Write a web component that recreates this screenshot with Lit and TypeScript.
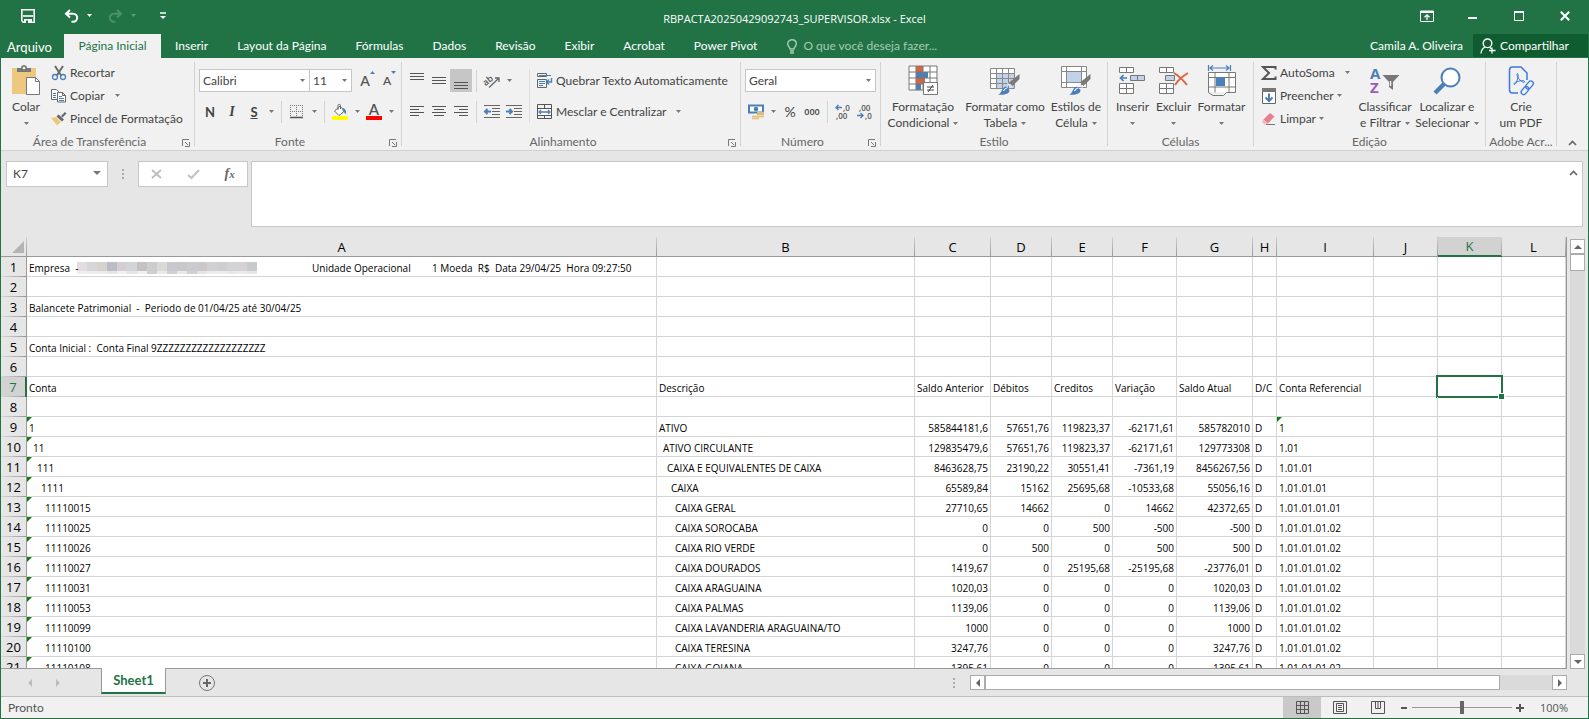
import { LitElement, html, css, svg, nothing } from "lit";
import { customElement, state } from "lit/decorators.js";
import { classMap } from "lit/directives/class-map.js";

type Row = [string, string, string, string, string, string, string, string, string];

const COLUMNS = [
  ["A", "auto"], ["B", "258px"], ["C", "76px"], ["D", "61px"], ["E", "61px"], ["F", "64px"],
  ["G", "76px"], ["H", "24px"], ["I", "97px"], ["J", "64px"], ["K", "64px"], ["L", "64px"],
];

const ACCOUNTS: Row[] = [
  ["1", "ATIVO", "585844181,6", "57651,76", "119823,37", "-62171,61", "585782010", "D", "1"],
  ["11", "ATIVO CIRCULANTE", "129835479,6", "57651,76", "119823,37", "-62171,61", "129773308", "D", "1.01"],
  ["111", "CAIXA E EQUIVALENTES DE CAIXA", "8463628,75", "23190,22", "30551,41", "-7361,19", "8456267,56", "D", "1.01.01"],
  ["1111", "CAIXA", "65589,84", "15162", "25695,68", "-10533,68", "55056,16", "D", "1.01.01.01"],
  ["11110015", "CAIXA GERAL", "27710,65", "14662", "0", "14662", "42372,65", "D", "1.01.01.01.01"],
  ["11110025", "CAIXA SOROCABA", "0", "0", "500", "-500", "-500", "D", "1.01.01.01.02"],
  ["11110026", "CAIXA RIO VERDE", "0", "500", "0", "500", "500", "D", "1.01.01.01.02"],
  ["11110027", "CAIXA DOURADOS", "1419,67", "0", "25195,68", "-25195,68", "-23776,01", "D", "1.01.01.01.02"],
  ["11110031", "CAIXA ARAGUAINA", "1020,03", "0", "0", "0", "1020,03", "D", "1.01.01.01.02"],
  ["11110053", "CAIXA PALMAS", "1139,06", "0", "0", "0", "1139,06", "D", "1.01.01.01.02"],
  ["11110099", "CAIXA LAVANDERIA ARAGUAINA/TO", "1000", "0", "0", "0", "1000", "D", "1.01.01.01.02"],
  ["11110100", "CAIXA TERESINA", "3247,76", "0", "0", "0", "3247,76", "D", "1.01.01.01.02"],
  ["11110108", "CAIXA GOIANA", "1395,61", "0", "0", "0", "1395,61", "D", "1.01.01.01.02"],
];

const MOSAIC = ["#e3dce1", "#d6d6d9", "#d6d3cf", "#bcbcc6", "#d4ced2", "#d2d4d7", "#c5c2c4", "#cccdcd", "#d9dad6",
  "#c8c8ce", "#c8c8cb", "#cacbd1", "#cbc7ca", "#d1d0d2", "#cfcdd0", "#d3d3d5", "#d5d1d4", "#c9cacb"];
const MOSAIC_LOW = ["#f0ecef", "#ececec", "#ecebea", "#e6e6e9", "#f2f0f1", "#e4e5e6", "#efeff0", "#cfd0ce", "#eaebe9",
  "#d0d0d5", "#e8e8ea", "#d0d0d6", "#e6e4e6", "#ebeaec", "#ececed", "#e8e8e9", "#eceaec", "#e6e6e7"];

const icon = (w: number, h: number, body: unknown) =>
  html`<svg class="ic" width=${w} height=${h} viewBox="0 0 ${w} ${h}" fill="none" aria-hidden="true">${body}</svg>`;

const caret = html`<svg class="ic caret" width="5" height="3" viewBox="0 0 5 3" aria-hidden="true"><path d="M0 0h5L2.500 3z" fill="#777"/></svg>`;
const caretFar = html`<svg class="ic caret far" width="5" height="3" viewBox="0 0 5 3" aria-hidden="true"><path d="M0 0h5L2.500 3z" fill="#777"/></svg>`;

const gridPath = (x: number, y: number, cw: number, ch: number, cols: number, rows: number) => {
  let d = "";
  for (let i = 0; i <= cols; i++) d += `M${x + i * cw} ${y}v${rows * ch}`;
  for (let j = 0; j <= rows; j++) d += `M${x} ${y + j * ch}h${cols * cw}`;
  return d;
};

const brush = svg`
  <path d="M29.500 8v5l-7 7-3.500-3.500z" fill="#7a7a7a"/>
  <path d="M8 28.500c4-.5 3-7 8-8l3.500 3.500c.5 4-6 5.500-11.500 4.500z" fill="#4a7fb8"/>
  <path d="M13.500 25c1-1.500 1.500-3 3.500-3" stroke="#fff" stroke-width="1.200"/>
  <path d="M17.500 17.500l4 4" stroke="#f1f1f1" stroke-width="1.200"/>`;

const I = {
  save: icon(14, 14, svg`<path d="M.8.8h12.400v12.400H2.300L.8 11.700z" stroke="#fff" stroke-width="1.600"/><path d="M2 7h10" stroke="#fff" stroke-width="1.600"/><path d="M3 10h8v4H3z" fill="#fff"/><path d="M5 11.500h2V14H5z" fill="#217346"/>`),
  undo: icon(15, 14, svg`<path d="M6 1L2 4.700 6 8.500M2.500 4.700H9c5.500 0 5.500 8 0 8H7.500" stroke="#fff" stroke-width="2"/>`),
  redo: icon(15, 14, svg`<path d="M9 1l4 3.700L9 8.500M12.500 4.700H6c-5.500 0-5.500 8 0 8h1.500" stroke="#4d906b" stroke-width="2"/>`),
  qcaret: icon(5, 3, svg`<path d="M0 0h5L2.500 3z" fill="#fff"/>`),
  qcaretOff: icon(5, 3, svg`<path d="M0 0h5L2.500 3z" fill="#5c9a77"/>`),
  custom: icon(6, 8, svg`<path d="M0 1h6" stroke="#fff" stroke-width="1.500"/><path d="M0 4h6L3 7z" fill="#fff"/>`),
  ribbonOpt: icon(14, 12, svg`<path d="M.5 1h13v10.500H.5z" stroke="#fff"/><path d="M0 2h14" stroke="#fff" stroke-width="2"/><path d="M7 10V5M4.500 7.200L7 4.800l2.500 2.400" stroke="#fff" stroke-width="1.300"/>`),
  min: icon(10, 10, svg`<path d="M0 7h9" stroke="#fff" stroke-width="2"/>`),
  max: icon(10, 10, svg`<path d="M.5 1h9v8.500h-9z" stroke="#fff"/><path d="M0 1h10" stroke="#fff" stroke-width="2"/>`),
  close: icon(10, 10, svg`<path d="M.8.8l8.400 8.400M9.200.8L.8 9.200" stroke="#fff" stroke-width="2"/>`),
  bulb: icon(10, 15, svg`<path d="M3 10c0-2-2.300-2.500-2.300-5C.7 2.500 2.500.8 5 .8s4.300 1.700 4.300 4.200c0 2.500-2.300 3-2.300 5z" stroke="#a5cbb4" stroke-width="1.400"/><path d="M3 12h4M3 14h4" stroke="#a5cbb4" stroke-width="1.300"/>`),
  person: icon(16, 16, svg`<circle cx="7.500" cy="5.300" r="4.300" stroke="#fff" stroke-width="1.400"/><path d="M1 15.500c.3-3.500 2-5.500 4.200-6.300M9.500 9.200l2 1.600M12 9.500v6M9 12.500h6.500" stroke="#fff" stroke-width="1.300"/>`),
  paste: icon(30, 31, svg`<path d="M1 3h24v26H1z" fill="#edc87e"/><path d="M6 3h4c0-4 6-4 6 0h4v4H6z" fill="#777"/><circle cx="13" cy="3" r="1.300" fill="#f1f1f1"/><path d="M15.500 12.500h9l4 4v13h-13z" fill="#fff" stroke="#777"/><path d="M24.500 12.500v4h4" stroke="#777"/>`),
  cut: icon(16, 16, svg`<path d="M4 1l6.500 10M12 1L5.500 11" stroke="#6a6a6a" stroke-width="2"/><circle cx="4" cy="12" r="2.500" stroke="#4a7fb8" stroke-width="1.300"/><circle cx="12" cy="12" r="2.500" stroke="#4a7fb8" stroke-width="1.300"/>`),
  copy: icon(16, 16, svg`<path d="M.5 1.500h5l2 2v8h-7z" fill="#fff" stroke="#666"/><path d="M2 5.500h3M2 7.500h3M2 9.500h3" stroke="#4a7fb8"/><path d="M6.500 4.500h5l3 3v6.500h-8z" fill="#fff" stroke="#666"/><path d="M11.500 4.500v3h3" stroke="#666"/><path d="M8 8.500h3M8 10.500h5M8 12.500h5" stroke="#4a7fb8"/>`),
  painter: icon(16, 15, svg`<path d="M0 7l5-1 5 5-4 3.500z" fill="#edc87e"/><path d="M5.500 5.500l2-2 5.500 5-2 2z" fill="#666"/><path d="M10 5l4-4 1.500 1.500-4 4z" fill="#666"/>`),
  borders: icon(14, 14, svg`<path d="M.5 0v12M6.500 0v12M12.500 0v12M0 .5h13M0 6.500h13" stroke="#777" stroke-dasharray="1 1"/><path d="M0 12.500h13" stroke="#555" stroke-width="1.500"/>`),
  bucket: icon(16, 16, svg`<path d="M2.500 7L8 2l4.500 5L7 11.500z" fill="#fff" stroke="#666"/><path d="M6 6V1.500C6 0 8.500 0 8.500 1.500V5" stroke="#666"/><path d="M10 4c3 0 4.500 2.500 4 6-1.500-.5-1.800-2-3.500-4z" fill="#4a7fb8"/><path d="M0 12h16v4H0z" fill="#ff0"/>`),
  orient: icon(16, 15, svg`<text x="-1" y="10" transform="rotate(-38 5 8)" class="glyph-sm">ab</text><path d="M5 14.500L14.500 5.500M11 5h4v4" stroke="#666" stroke-width="1.300"/>`),
  wrap: icon(17, 16, svg`<path d="M.5.500h9v3h-9zM.5 6.500h9v8h-9z" stroke="#666"/><path d="M2 2.500h12M2 8.500h6M2 10.500h6M2 12.500h4" stroke="#4a7fb8"/><path d="M14.500 5v4h-5M12 6.500L9.500 9l2.500 2.500" stroke="#4a7fb8" stroke-width="1.400"/>`),
  merge: icon(17, 16, svg`<path d="M.5.500h14v14H.500zM.5 4.500h14M.5 11.500h14M7.500.500v4M7.500 11.500v3" stroke="#555"/><path d="M1 5h13v6H1z" fill="#fff"/><path d="M2 8h11M4 6L2 8l2 2M11 6l2 2-2 2" stroke="#4a7fb8" stroke-width="1.300"/>`),
  money: icon(16, 16, svg`<path d="M1 1.500h14v7H1z" fill="#fff" stroke="#4a7fb8" stroke-width="2"/><circle cx="8" cy="5" r="2.300" fill="#4a7fb8"/><path d="M9 8.500h7M9 10.500h7M9 12.500h7M4 12.500h7M4 14.500h7" stroke="#e6bd73" stroke-width="1.500"/>`),
  cond: icon(30, 31, svg`<path d="M.5.500h28v24H.500z" fill="#fff"/><path d="M8 1h7v6H8zM8 13h9v6H8z" fill="#dc6240"/><path d="M8 7h12v6H8zM8 19h5v6H8z" fill="#4a7fb8"/><path d=${gridPath(1, 1, 7, 6, 4, 4)} stroke="#777"/><path d="M15.500 17.500h14v12h-14z" fill="#fff" stroke="#777"/><path d="M19 22h7M19 25h7M25 20l-5 7" stroke="#444"/>`),
  table: icon(30, 30, svg`<path d="M.5 2.500h24v20H.500z" fill="#fff"/><path d="M7 8h17v15H7z" fill="#c0d3e9"/><path d=${gridPath(0.5, 2.5, 6, 5, 4, 4)} stroke="#888"/>${brush}`),
  cellStyle: icon(30, 30, svg`<path d="M1 .5h25v21H1z" fill="#fff"/><path d=${gridPath(0.5, 0.5, 25, 21, 1, 1) + "M5.500 .5v21M20.500 .5v21M.5 5.500h25M.5 16.500h25"} stroke="#888"/><path d="M6 6h14v10H6z" fill="#c0d3e9"/>${brush}`),
  insert: icon(28, 29, svg`<path d="M.5 1.500h14v5h-14zM.5 17.500h14v10h-14z" fill="#fff"/><path d="M.5 1.500h14v5h-14zM7.500 1.500v5M.5 17.500h14v10h-14zM7.500 17.500v10M.5 22.500h14" stroke="#777"/><path d="M11.500 9.500h14v5h-14z" fill="#c0d3e9" stroke="#777"/><path d="M18.500 9.500v5" stroke="#777"/><path d="M2 12h6M4.500 9L1.500 12l3 3" stroke="#4a7fb8" stroke-width="1.700"/>`),
  remove: icon(30, 29, svg`<path d="M.5 1.500h14v5h-14zM.5 17.500h14v10h-14z" fill="#fff"/><path d="M.5 1.500h14v5h-14zM7.500 1.500v5M.5 17.500h14v10h-14zM7.500 17.500v10M.5 22.500h14" stroke="#777"/><path d="M6.500 9.500h9v5h-9z" fill="#c0d3e9" stroke="#777"/><path d="M15 7c5 3 9 7 13 12M29 7c-5 3-10 7-13 12" stroke="#dc6240" stroke-width="2"/>`),
  format: icon(30, 32, svg`<path d="M1 7h28v20H1z" fill="#fff"/><path d="M1.500 7.500h27v20h-9l-3 3H6l-4.500-3zM8 7.500v20M22 7.500v20M1.500 12.500h27M1.500 22h27" stroke="#777"/><path d="M9 12h9v9H9z" fill="#4a7fb8"/><path d="M1.500 0v6M23.500 0v6M3 3h19M6 .5L3 3l3 2.500M19 .5L22 3l-3 2.500" stroke="#4a7fb8" stroke-width="1.200"/>`),
  sigma: icon(16, 16, svg`<path d="M14.500 4.500V2H2l6 6-6 6h12.500v-2.500" stroke="#555" stroke-width="2"/>`),
  fillDown: icon(16, 16, svg`<path d="M1.500.500h13v15h-13z" fill="#fff" stroke="#666"/><path d="M1 0h14v4H1z" fill="#777"/><path d="M8 5.500v7M4.500 9.500L8 13l3.500-3.500" stroke="#4a7fb8" stroke-width="2"/>`),
  eraser: icon(16, 16, svg`<path d="M2.500 8.500L9 2l4.500 3.500-6.500 7z" fill="#e87f8c"/><path d="M2.500 8.500L.8 11l2.700 2.500 3.500-1z" fill="#f3b8bf"/><path d="M5 13.500h9" stroke="#777"/>`),
  sort: icon(30, 28, svg`<text x="0" y="12" class="glyph-a">A</text><text x="0" y="26" class="glyph-z">Z</text><path d="M12.500 8h17l-6.500 7v8l-4-3v-5z" fill="#777"/><path d="M20.500 14v5" stroke="#f1f1f1" stroke-width="1.500"/>`),
  find: icon(30, 28, svg`<circle cx="18.500" cy="10.500" r="9" fill="#fff" stroke="#4a7fb8" stroke-width="2"/><path d="M12 17l-9 9" stroke="#4a7fb8" stroke-width="4.500"/>`),
  pdf: icon(26, 30, svg`<path d="M10 27H4.500c-2 0-3-1-3-3V4c0-2 1-3 3-3H13l6 6v7" stroke="#3a78e0" stroke-width="1.500"/><path d="M9.500 7.500c-1.500 0 0 4 2.500 6.500s5 3 4.500 1.500c-.5-1.700-7.500-.5-10 1.500-1.500 1.500 0 2.500 1.500 0S11 7.800 9.500 7.500z" stroke="#3a78e0"/><rect x="-4.500" y="-2.500" width="9" height="5" rx="2.500" transform="translate(21.500 19) rotate(-50)" stroke="#3a78e0" stroke-width="1.300"/><rect x="-4.500" y="-2.500" width="9" height="5" rx="2.500" transform="translate(17 24.500) rotate(-50)" stroke="#3a78e0" stroke-width="1.300"/>`),
  launcher: icon(8, 8, svg`<path d="M.5 7V.5H7M3 3l3 3M7.500 3v4.500H3" stroke="#777"/>`),
  chevUp: icon(9, 6, svg`<path d="M1 5l3.500-3.500L8 5" stroke="#666" stroke-width="1.700"/>`),
};

const lines = (widths: number[], top: number, align: "l" | "c" | "r") => {
  let d = "";
  widths.forEach((w, i) => {
    const x = align === "l" ? 0 : align === "c" ? (14 - w) / 2 : 14 - w;
    d += `M${x} ${top + i * 3 + 0.5}h${w}`;
  });
  return icon(14, 18, svg`<path d=${d} stroke="#555"/>`);
};

const indent = (right: boolean) => icon(16, 14, svg`
  <path d="M0 .5h16M8 3.500h8M8 6.500h8M8 9.500h8M0 12.500h16" stroke="#666"/>
  <path d=${right ? "M0 6.500h5M3.500 4l2.500 2.500L3.500 9" : "M2 6.500h5M3.500 4L1 6.500 3.500 9"} stroke="#4a7fb8" stroke-width="2"/>`);

const decimals = (more: boolean) => icon(16, 16, more
  ? svg`<text x="8" y="7" class="glyph-num">,0</text><text x="1" y="15" class="glyph-num">,00</text><path d="M1 3.500h6M3.500 1l-2.500 2.500L3.500 6" stroke="#4a7fb8" stroke-width="1.400"/>`
  : svg`<text x="2" y="7" class="glyph-num">,00</text><text x="8" y="15" class="glyph-num">,0</text><path d="M0 11.500h6M3.500 9L6 11.500 3.500 14" stroke="#4a7fb8" stroke-width="1.400"/>`);

@customElement("app-root")
export class AppRoot extends LitElement {
  @state() private zoom = 50;

  static styles = css`
    :host {
      display: flex; flex-direction: column; box-sizing: border-box; height: 100vh; overflow: hidden;
      border: 1px solid #217346; border-top: 0; background: #e6e6e6; color: #444;
      font: 12px/16px Lato, "Noto Sans", sans-serif;
    }
    *, *::before, *::after { box-sizing: border-box; }
    button, input, select, textarea { font: inherit; color: inherit; margin: 0; padding: 0; border: 0; background: none; border-radius: 0; outline: none; }
    .ic { display: block; flex: none; overflow: visible; }
    .glyph-sm { font: 600 9px "Open Sans", sans-serif; fill: #555; }
    .glyph-num { font: 600 8px "Open Sans", sans-serif; fill: #555; }
    .glyph-a { font: bold 15px "Open Sans", sans-serif; fill: #4a7fb8; }
    .glyph-z { font: bold 15px "Open Sans", sans-serif; fill: #9a5bb8; }

    .title { display: grid; grid-template-columns: 1fr auto 1fr; height: 34px; background: #217346; color: #fff; }
    .title h1 { margin: 0; padding-top: 11px; font: 11px/16px "Open Sans", "Noto Sans", sans-serif; }
    .quick { display: flex; align-items: center; padding: 0 0 3px 20px; }
    .quick .undo { margin-left: 29px; }
    .quick .drop { margin-left: 8px; }
    .quick .redo { margin-left: 16px; }
    .quick .custom { margin-left: 24px; }
    .window { display: flex; justify-content: flex-end; align-items: center; padding-bottom: 2px; }
    .window button { display: flex; justify-content: center; width: 46px; }

    .tabs { display: flex; height: 24px; background: #217346; color: #fff; }
    .tabs button { display: flex; align-items: center; justify-content: center; padding: 0 15px 0 14px; white-space: nowrap; }
    .tabs .file { width: 63px; padding: 2px 6px 0 0; font-size: 13px; }
    .tabs .active { width: 97px; background: #f1f1f1; color: #217346; padding: 0; }
    .tell { display: flex; flex: 1; align-items: center; gap: 6px; padding-left: 15px; }
    .tell input { flex: 1; min-width: 0; }
    .tell input::placeholder { color: #a5cbb4; opacity: 1; }
    .tabs .user { padding: 0 10px; }
    .tabs .share { justify-content: flex-start; gap: 4px; width: 115px; height: 23px; padding: 0 0 0 7px; background: #0f5c31; }

    .ribbon { display: flex; flex: none; height: 93px; padding-top: 4px; background: #f1f1f1; border-bottom: 1px solid #d2d0d2; }
    .group { display: flex; flex-direction: column; flex: none; position: relative; height: 84px; border-right: 1px solid #d2d2d2; }
    .body { display: flex; flex: 1; }
    .group > footer { display: flex; justify-content: center; position: relative; height: 16px; margin-bottom: -4px; padding-right: 16px; color: #666; white-space: nowrap; }
    .group.bare > footer { padding-right: 0; }
    .group > footer button { position: absolute; right: 4px; top: 5px; }
    .clip { width: 194px; } .fonte { width: 207px; } .alinha { width: 339px; } .numero { width: 140px; }
    .estilo { width: 227px; } .celulas { width: 146px; } .edicao { width: 232px; } .adobe { width: 71px; }
    .celulas .body, .numero .body, .fonte .body, .alinha .body { padding-left: 4px; }
    .big { display: flex; flex: none; flex-direction: column; align-items: center; white-space: nowrap; }
    .big .pic { display: flex; align-items: center; justify-content: center; height: 37px; }
    .big .row { display: flex; align-items: center; gap: 4px; height: 16px; }
    .w41 { width: 41px; } .w50 { width: 50px; } .w55 { width: 55px; } .w62 { width: 62px; } .w70 { width: 70px; } .w80 { width: 80px; } .w84 { width: 84px; }
    .stack { display: flex; flex-direction: column; flex: none; }
    .edicao .stack { width: 100px; padding-left: 7px; }
    .small { display: flex; flex: none; align-items: center; gap: 3px; height: 23px; padding-bottom: 2px; white-space: nowrap; }
    .small .caret.far { margin-left: 7px; }
    .line { display: flex; align-items: center; }
    .two { display: flex; flex-direction: column; gap: 8px; padding-top: 7px; }
    .two .line { height: 23px; }
    .tool { display: flex; flex: none; align-items: center; justify-content: center; width: 22px; height: 23px; white-space: nowrap; }
    .tool.on { background: #c6c6c6; }
    .tool.drop { width: 12px; }
    .tool.wide { width: auto; gap: 2px; }
    .tool.wide + .drop { margin-left: 6px; }
    .tool.grow { margin-left: 2px; }
    .tool.pct { font-size: 14px; }
    .tool.ths { font: 600 9px "Open Sans", sans-serif; }
    .vsep { width: 1px; height: 22px; margin: 0 4px; background: #d2d2d2; }
    .b, .i, .u { font-size: 13px; font-weight: 700; }
    .i { font-family: "Liberation Serif", serif; font-style: italic; font-size: 14px; }
    .u { text-decoration: underline; }
    .pick { display: grid; align-items: center; height: 23px; background: #fff; border: 1px solid #c6c6c6; }
    .pick > * { grid-area: 1 / 1; }
    .pick select { appearance: none; width: 100%; height: 21px; padding-left: 3px; color: #444; }
    .pick .caret { justify-self: end; margin-right: 4px; pointer-events: none; }
    .p-font { width: 111px; } .p-size { width: 43px; margin-left: -1px; } .p-num { width: 131px; }
    .letter { position: relative; font-size: 14px; font-weight: 600; line-height: 16px; color: #555; }
    .letter.s { font-size: 12px; }
    .letter svg { position: absolute; right: -5px; top: -2px; }
    .fontcolor { display: flex; flex-direction: column; align-items: center; width: 16px; height: 17px; color: #555; font-size: 15px; font-weight: 600; line-height: 13px; border-bottom: 4px solid #f00; }
    .tall { width: 1px; height: 54px; margin: 7px 7px 0 4px; background: #dedede; }
    .collapse { display: flex; flex: 1; align-items: flex-end; justify-content: center; padding-bottom: 4px; }

    .formula { display: flex; flex: none; align-items: flex-start; padding: 10px 5px; }
    .name { display: grid; align-items: center; width: 102px; height: 26px; background: #fff; border: 1px solid #c6c6c6; }
    .name > * { grid-area: 1 / 1; }
    .name input { width: 100%; padding-left: 6px; }
    .name svg { justify-self: end; margin: 0 6px 2px; }
    .dots { width: 2px; height: 10px; margin: 8px 14px; background: repeating-linear-gradient(#aaa 0 2px, transparent 2px 4px); }
    .fx { display: flex; align-items: center; justify-content: space-around; width: 110px; height: 26px; background: #fff; border: 1px solid #c6c6c6; }
    .fx em { font: italic bold 14px "Liberation Serif", serif; color: #666; }
    .fx em small { font-size: 11px; }
    .entry { display: flex; flex: 1; height: 66px; margin-left: 3px; background: #fff; border: 1px solid #c6c6c6; }
    .entry textarea { flex: 1; resize: none; padding: 4px; }
    .entry button { display: flex; padding: 8px 4px 0 0; }

    .sheet { display: flex; flex: 1; min-height: 0; }
    .view { flex: 1; min-width: 0; overflow: hidden; border-right: 1px solid #999; border-bottom: 1px solid #999; }
    table { width: 100%; table-layout: fixed; border-spacing: 0; color: #000; background: #fff; font-family: "Open Sans", "Noto Sans", sans-serif; }
    th { position: relative; padding: 0 1px 0 0; font-weight: 400; font-size: 13px; line-height: 18px; background: #e6e6e6; }
    thead th { height: 20px; border-bottom: 1px solid #999; }
    thead th::after { content: ""; position: absolute; right: 0; top: 0; width: 1px; height: 19px; background: linear-gradient(#d0d0d0, #999); }
    thead th.sel { background: #d2d2d2; color: #217346; border-bottom: 2px solid #217346; }
    tbody th { height: 20px; padding: 0; border-right: 1px solid #999; }
    tbody th::after { content: ""; position: absolute; left: 0; right: 0; bottom: 0; height: 1px; background: linear-gradient(90deg, #d8d8d8, #999); }
    tbody th.sel { background: #d2d2d2; color: #217346; border-right: 2px solid #217346; }
    .corner::before { content: ""; position: absolute; right: 3px; bottom: 3px; border: 6px solid transparent; border-right-color: #b4b4b4; border-bottom-color: #b4b4b4; }
    td { position: relative; height: 20px; padding: 3px 2px 0; font-size: 10px; line-height: 16px; white-space: pre; border-right: 1px solid #d4d4d4; border-bottom: 1px solid #d4d4d4; }
    td.num { text-align: right; }
    td.flag::before { content: ""; position: absolute; left: 0; top: 0; border-top: 5px solid #107c10; border-right: 5px solid transparent; }
    td.cur::before { content: ""; position: absolute; inset: -2px; border: 2px solid #217346; }
    td.cur::after { content: ""; position: absolute; z-index: 1; right: -4px; bottom: -4px; width: 7px; height: 7px; background: #217346; border: 1px solid #fff; }
    .lead { display: flex; }
    .lead svg { margin: 2px 55px 0 0; }
    .lead .co { z-index: 1; width: 48px; } .lead .un { width: 120px; }

    .vscroll { display: flex; flex-direction: column; width: 15px; margin: 2px 3px 0; background: #dadada; }
    .arrow { display: flex; align-items: center; justify-content: center; flex: none; width: 15px; height: 15px; background: #fff; border: 1px solid #ababab; }
    .vscroll .thumb { height: 17px; background: #fff; border: 1px solid #ababab; }
    .vscroll .arrow:last-child { margin-top: auto; }

    .foot { display: flex; flex: none; align-items: center; height: 28px; padding-right: 21px; border-bottom: 1px solid #bebebe; }
    .nav { display: flex; justify-content: space-between; width: 32px; margin: 0 41px 0 27px; }
    .sheet-tab { align-self: flex-start; width: 65px; height: 26px; margin-top: -1px; background: #fff; border: 1px solid #999; border-top: 0; border-bottom: 2px solid #217346; color: #217346; font-weight: 700; font-size: 13px; }
    .add { margin-left: 33px; }
    .foot .dots { margin: 0 15px 0 auto; }
    .hscroll { display: flex; width: 597px; background: #dadada; }
    .hscroll .thumb { width: 515px; background: #fff; border: 1px solid #ababab; }
    .hscroll .arrow:last-child { margin-left: auto; }
    .status { display: flex; flex: none; align-items: center; height: 21px; padding: 0 20px 0 7px; background: #f1f1f1; color: #555; }
    .status > span { flex: 1; }
    .status > button { font-family: "Open Sans", sans-serif; font-size: 11px; }
    .views { display: flex; align-self: stretch; }
    .views button { display: flex; align-items: center; justify-content: center; width: 38px; }
    .views button.on { background: #c9c9c9; }
    .zoom { display: flex; align-items: center; gap: 4px; margin: 0 16px 0 4px; }
    .zoom input { appearance: none; width: 100px; height: 13px; background: linear-gradient(#999, #999) center / 100% 1px no-repeat; }
    .zoom input::-webkit-slider-thumb { appearance: none; width: 4px; height: 13px; background: #666; }
  `;

  private account(r: Row, i: number) {
    const level = Math.min(i, 4) * 4;
    return html`<tr>
      <th scope="row">${i + 9}</th>
      <td class="flag"><span style="padding-left:${level}px">${r[0]}</span></td>
      <td><span style="padding-left:${level}px">${r[1]}</span></td>
      ${r.slice(2, 7).map((v) => html`<td class="num">${v}</td>`)}
      <td>${r[7]}</td>
      <td class=${classMap({ flag: i === 0 })}>${r[8]}</td>
      <td></td><td></td><td></td>
    </tr>`;
  }

  private plain(n: number, cells: unknown[] = []) {
    const sel = n === 7;
    return html`<tr>
      <th scope="row" class=${classMap({ sel })}>${n}</th>
      ${COLUMNS.map(([name], i) => html`<td class=${classMap({ cur: sel && name === "K" })}>${cells[i] ?? nothing}</td>`)}
    </tr>`;
  }

  private group(cls: string, label: string, body: unknown, launcher = true) {
    return html`<section class="group ${cls} ${launcher ? "" : "bare"}" aria-label=${label}>
      <div class="body">${body}</div>
      <footer>${label}${launcher ? html`<button aria-label="Opções de ${label}">${I.launcher}</button>` : nothing}</footer>
    </section>`;
  }

  private big(pic: unknown, l1: string, l2: string, drop: boolean, cls: string) {
    return html`<button class="big ${cls}"><span class="pic">${pic}</span><span class="row">${l1}</span><span class="row">${l2}${drop ? caret : nothing}</span></button>`;
  }

  render() {
    const company = html`<span class="lead"><span class="co">Empresa  -</span><svg width="180" height="12" aria-hidden="true">
      ${MOSAIC.map((c, i) => svg`<rect x=${i * 10} y="0" width="10" height="9" fill=${c}/><rect x=${i * 10} y="9" width="10" height="3" fill=${MOSAIC_LOW[i]}/>`)}
      </svg><span class="un">Unidade Operacional</span><span>1 Moeda  R$  Data 29/04/25  Hora 09:27:50</span></span>`;
    const tri = (d: string, w: number, h: number, c = "#666") => icon(w, h, svg`<path d=${d} fill=${c}/>`);
    return html`
      <header class="title">
        <div class="quick">
          <button aria-label="Salvar">${I.save}</button>
          <button class="undo" aria-label="Desfazer">${I.undo}</button><button class="drop" aria-label="Lista desfazer">${I.qcaret}</button>
          <button class="redo" aria-label="Refazer">${I.redo}</button><button class="drop" aria-label="Lista refazer">${I.qcaretOff}</button>
          <button class="custom" aria-label="Personalizar">${I.custom}</button>
        </div>
        <h1>RBPACTA20250429092743_SUPERVISOR.xlsx - Excel</h1>
        <div class="window">
          <button aria-label="Opções da Faixa">${I.ribbonOpt}</button><button aria-label="Minimizar">${I.min}</button>
          <button aria-label="Maximizar">${I.max}</button><button aria-label="Fechar">${I.close}</button>
        </div>
      </header>
      <nav class="tabs">
        <button class="file">Arquivo</button><button class="active">Página Inicial</button>
        ${["Inserir", "Layout da Página", "Fórmulas", "Dados", "Revisão", "Exibir", "Acrobat", "Power Pivot"].map((t) => html`<button>${t}</button>`)}
        <label class="tell">${I.bulb}<input placeholder="O que você deseja fazer..." aria-label="O que você deseja fazer" /></label>
        <button class="user">Camila A. Oliveira</button>
        <button class="share">${I.person}Compartilhar</button>
      </nav>
      <div class="ribbon">
        ${this.group("clip", "Área de Transferência", html`
          ${this.big(I.paste, "Colar", "", true, "w50")}
          <div class="stack">
            <button class="small">${I.cut}Recortar</button>
            <button class="small">${I.copy}Copiar${caretFar}</button>
            <button class="small">${I.painter}Pincel de Formatação</button>
          </div>`)}
        ${this.group("fonte", "Fonte", html`<div class="two">
          <div class="line">
            <label class="pick p-font"><select aria-label="Fonte"><option>Calibri</option></select>${caret}</label>
            <label class="pick p-size"><select aria-label="Tamanho"><option>11</option></select>${caret}</label>
            <button class="tool grow" aria-label="Aumentar fonte"><span class="letter">A${tri("M0 3h5L2.500 0z", 5, 3, "#4a7fb8")}</span></button>
            <button class="tool" aria-label="Diminuir fonte"><span class="letter s">A${tri("M0 0h5L2.500 3z", 5, 3, "#4a7fb8")}</span></button>
          </div>
          <div class="line">
            <button class="tool b">N</button><button class="tool i">I</button><button class="tool u">S</button><button class="tool drop" aria-label="Sublinhado">${caret}</button>
            <span class="vsep"></span>
            <button class="tool" aria-label="Bordas">${I.borders}</button><button class="tool drop" aria-label="Lista de bordas">${caret}</button>
            <span class="vsep"></span>
            <button class="tool" aria-label="Cor de preenchimento">${I.bucket}</button><button class="tool drop" aria-label="Cores de preenchimento">${caret}</button>
            <button class="tool" aria-label="Cor da fonte"><span class="fontcolor">A</span></button><button class="tool drop" aria-label="Cores da fonte">${caret}</button>
          </div></div>`)}
        ${this.group("alinha", "Alinhamento", html`
          <div class="two">
            <div class="line">
              <button class="tool" aria-label="Em cima">${lines([14, 14, 14], 1, "l")}</button>
              <button class="tool" aria-label="No meio">${lines([14, 14, 14], 5, "l")}</button>
              <button class="tool on" aria-label="Embaixo">${lines([14, 14, 14], 10, "l")}</button>
              <span class="vsep"></span>
              <button class="tool" aria-label="Orientação">${I.orient}</button><button class="tool drop" aria-label="Orientações">${caret}</button>
            </div>
            <div class="line">
              <button class="tool" aria-label="Esquerda">${lines([14, 9, 14, 9], 3, "l")}</button>
              <button class="tool" aria-label="Centro">${lines([14, 10, 14, 10], 3, "c")}</button>
              <button class="tool" aria-label="Direita">${lines([14, 9, 14, 9], 3, "r")}</button>
              <span class="vsep"></span>
              <button class="tool" aria-label="Diminuir recuo">${indent(false)}</button><button class="tool" aria-label="Aumentar recuo">${indent(true)}</button>
            </div>
          </div>
          <span class="tall"></span>
          <div class="two">
            <div class="line"><button class="tool wide">${I.wrap}Quebrar Texto Automaticamente</button></div>
            <div class="line"><button class="tool wide">${I.merge}Mesclar e Centralizar</button><button class="tool drop" aria-label="Opções de mesclagem">${caret}</button></div>
          </div>`)}
        ${this.group("numero", "Número", html`<div class="two">
          <div class="line"><label class="pick p-num"><select aria-label="Formato"><option>Geral</option></select>${caret}</label></div>
          <div class="line">
            <button class="tool" aria-label="Contábil">${I.money}</button><button class="tool drop" aria-label="Moedas">${caret}</button>
            <button class="tool pct">%</button><button class="tool ths">000</button>
            <span class="vsep"></span>
            <button class="tool" aria-label="Aumentar casas decimais">${decimals(true)}</button><button class="tool" aria-label="Diminuir casas decimais">${decimals(false)}</button>
          </div></div>`)}
        ${this.group("estilo", "Estilo", html`
          ${this.big(I.cond, "Formatação", "Condicional", true, "w84")}
          ${this.big(I.table, "Formatar como", "Tabela", true, "w80")}
          ${this.big(I.cellStyle, "Estilos de", "Célula", true, "w62")}`, false)}
        ${this.group("celulas", "Células", html`
          ${this.big(I.insert, "Inserir", "", true, "w41")}
          ${this.big(I.remove, "Excluir", "", true, "w41")}
          ${this.big(I.format, "Formatar", "", true, "w55")}`, false)}
        ${this.group("edicao", "Edição", html`
          <div class="stack">
            <button class="small">${I.sigma}AutoSoma${caretFar}</button>
            <button class="small">${I.fillDown}Preencher${caret}</button>
            <button class="small">${I.eraser}Limpar${caret}</button>
          </div>
          ${this.big(I.sort, "Classificar", "e Filtrar", true, "w62")}
          ${this.big(I.find, "Localizar e", "Selecionar", true, "w62")}`, false)}
        ${this.group("adobe", "Adobe Acr...", this.big(I.pdf, "Crie", "um PDF", false, "w70"), false)}
        <button class="collapse" aria-label="Recolher a Faixa">${I.chevUp}</button>
      </div>
      <div class="formula">
        <label class="name"><input value="K7" aria-label="Caixa de Nome" />${tri("M0 0h8L4 4z", 8, 4, "#777")}</label>
        <span class="dots"></span>
        <div class="fx">
          <button aria-label="Cancelar">${icon(11, 10, svg`<path d="M1 1l9 8M10 1L1 9" stroke="#bbb" stroke-width="1.700"/>`)}</button>
          <button aria-label="Inserir">${icon(13, 10, svg`<path d="M1 6l3.500 3L12 1" stroke="#c3c3c3" stroke-width="2.200"/>`)}</button>
          <button aria-label="Inserir Função"><em>f<small>x</small></em></button>
        </div>
        <div class="entry"><textarea aria-label="Barra de fórmulas"></textarea><button aria-label="Recolher">${I.chevUp}</button></div>
      </div>
      <main class="sheet">
        <div class="view">
          <table>
            <colgroup><col style="width:26px" />${COLUMNS.map(([, w]) => html`<col style="width:${w}" />`)}</colgroup>
            <thead><tr><th class="corner"></th>${COLUMNS.map(([n]) => html`<th scope="col" class=${classMap({ sel: n === "K" })}>${n}</th>`)}</tr></thead>
            <tbody>
              ${this.plain(1, [company])}
              ${this.plain(2)}
              ${this.plain(3, ["Balancete Patrimonial  -  Periodo de 01/04/25 até 30/04/25"])}
              ${this.plain(4)}
              ${this.plain(5, ["Conta Inicial :  Conta Final 9ZZZZZZZZZZZZZZZZZZZ"])}
              ${this.plain(6)}
              ${this.plain(7, ["Conta", "Descrição", "Saldo Anterior", "Débitos", "Creditos", "Variação", "Saldo Atual", "D/C", "Conta Referencial"])}
              ${this.plain(8)}
              ${ACCOUNTS.map((r, i) => this.account(r, i))}
            </tbody>
          </table>
        </div>
        <div class="vscroll">
          <button class="arrow" aria-label="Rolar para cima">${tri("M0 4h8L4 0z", 8, 4)}</button><div class="thumb"></div>
          <button class="arrow" aria-label="Rolar para baixo">${tri("M0 0h8L4 4z", 8, 4)}</button>
        </div>
      </main>
      <div class="foot">
        <div class="nav"><button aria-label="Planilha anterior">${tri("M4 0v8L0 4z", 4, 8, "#bbb")}</button><button aria-label="Próxima planilha">${tri("M0 0v8l4-4z", 4, 8, "#bbb")}</button></div>
        <button class="sheet-tab">Sheet1</button>
        <button class="add" aria-label="Nova planilha">${icon(16, 16, svg`<circle cx="8" cy="8" r="7.500" stroke="#777"/><path d="M4 8h8M8 4v8" stroke="#666" stroke-width="2"/>`)}</button>
        <span class="dots"></span>
        <div class="hscroll">
          <button class="arrow" aria-label="Rolar para a esquerda">${tri("M4 0v8L0 4z", 4, 8)}</button><div class="thumb"></div>
          <button class="arrow" aria-label="Rolar para a direita">${tri("M0 0v8l4-4z", 4, 8)}</button>
        </div>
      </div>
      <footer class="status">
        <span>Pronto</span>
        <div class="views">
          <button class="on" aria-label="Normal">${icon(13, 13, svg`<path d=${gridPath(0.5, 0.5, 4, 4, 3, 3)} stroke="#555"/>`)}</button>
          <button aria-label="Layout da Página">${icon(14, 13, svg`<path d="M.5.500h13v12H.500zM3.500 2.500h7v8h-7zM5 4.500h4M5 6.500h4M5 8.500h4" stroke="#555"/>`)}</button>
          <button aria-label="Quebra de Página">${icon(14, 13, svg`<path d="M.5.500h13v12H.500zM4.500.500v7h5v-7M7 .5v7" stroke="#555"/>`)}</button>
        </div>
        <div class="zoom">
          <button aria-label="Reduzir">${icon(7, 8, svg`<path d="M0 4h6" stroke="#555" stroke-width="2"/>`)}</button>
          <input type="range" min="0" max="100" .value=${String(this.zoom)} @input=${(e: Event) => (this.zoom = +(e.target as HTMLInputElement).value)} aria-label="Zoom" />
          <button aria-label="Ampliar">${icon(8, 8, svg`<path d="M0 4h8M4 0v8" stroke="#555" stroke-width="2"/>`)}</button>
        </div>
        <button>100%</button>
      </footer>`;
  }
}
